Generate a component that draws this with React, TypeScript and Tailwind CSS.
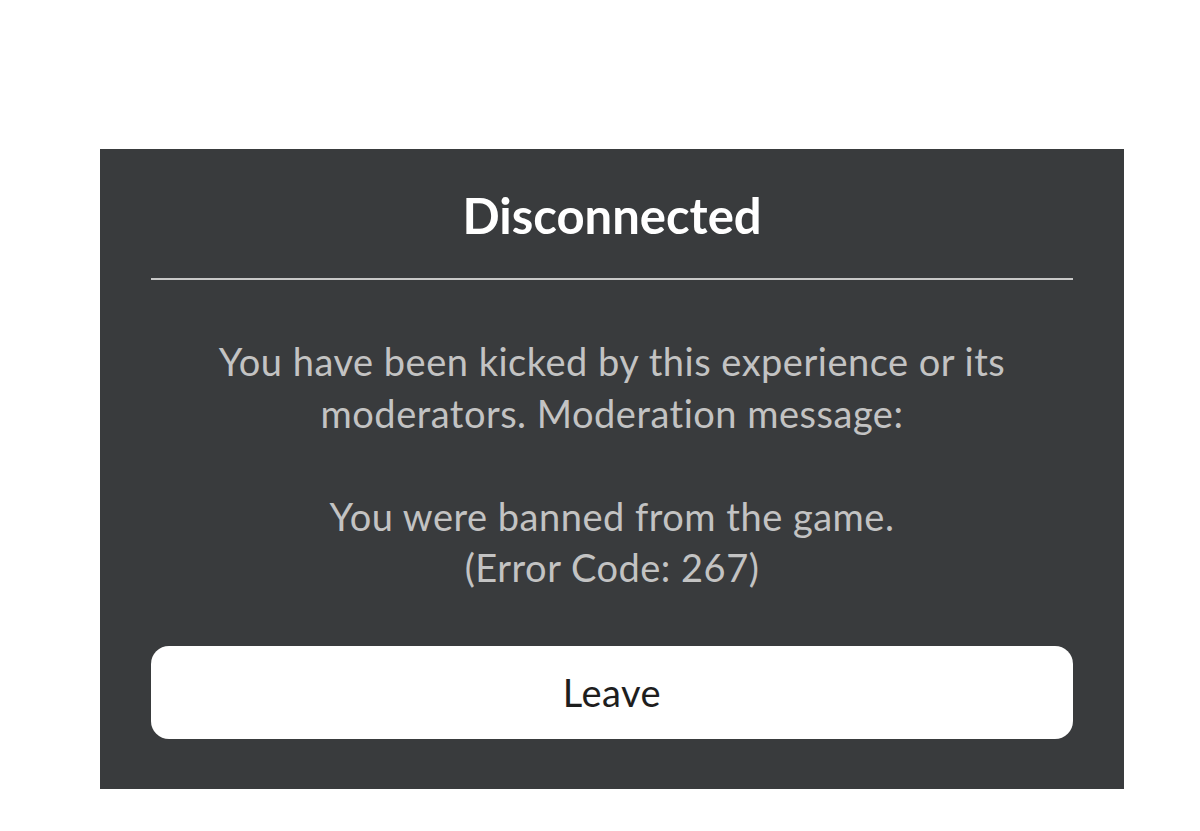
import React from 'react';

const font = { fontFamily: 'Lato, "Noto Sans", sans-serif' };

const DisconnectedDialog = () => {
  return (
    <div className="ml-[100px] mt-[149px] w-[1024px] bg-[#393b3d] px-[51px] pt-[36px] pb-[50px] flex flex-col">
      <h1 className="text-center text-white font-bold text-[49px] leading-[60px]" style={font}>
        Disconnected
      </h1>
      <div className="mt-[33px] h-[2px] bg-[#c8c8c8]" />
      <p
        className="mt-[56px] text-center text-[#c3c3c3] text-[38px] tracking-[0.5px] leading-[51.5px] whitespace-pre-line"
        style={font}
      >
        {'You have been kicked by this experience or its\nmoderators. Moderation message:\n\nYou were banned from the game.\n(Error Code: 267)'}
      </p>
      <button
        className="mt-[52px] h-[93px] w-full rounded-[18px] bg-white text-[#1e1e1e] text-[38px] tracking-[0.5px]"
        style={font}
      >
        Leave
      </button>
    </div>
  );
};

export default function App() {
  return (
    <div className="w-[1200px] h-[831px] bg-white overflow-hidden pt-px -mt-px">
      <DisconnectedDialog />
    </div>
  );
}
